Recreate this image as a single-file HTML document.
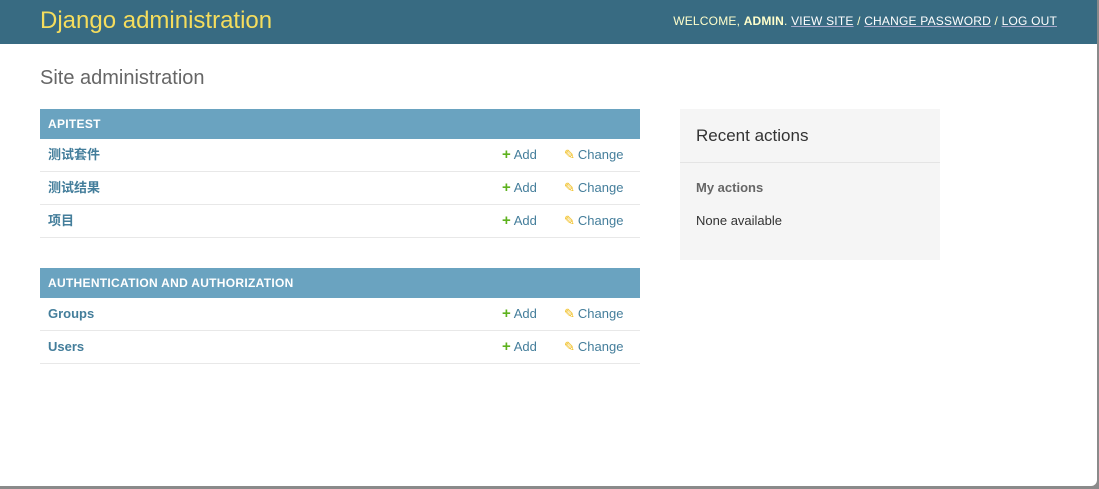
<!DOCTYPE html>
<html><head><meta charset="utf-8"><style>
body{margin:0;width:1099px;height:489px;overflow:hidden;background:#8a8a8a;font-family:"Liberation Sans","Noto Sans CJK SC",sans-serif;}
#win{position:absolute;left:0;top:0;width:1097px;height:486px;background:#fff;border-bottom-right-radius:6px;overflow:hidden;}
#hdr{height:44px;background:#386b82;position:relative;}
#hdr .t{position:absolute;left:40px;top:7px;font-size:24px;color:#f5dd5d;}
#hdr .u{position:absolute;right:40px;top:14px;font-size:12px;color:#ffc;letter-spacing:0.2px;}
#hdr .u a{color:#fff;text-decoration:underline;text-decoration-color:#aac;}
h1{position:absolute;left:40px;top:67px;margin:0;font-weight:300;font-size:20px;color:#666;}
.mod{position:absolute;left:40px;width:600px;}
.cap{height:30px;background:#6aa3c0;color:#fff;font-size:12px;font-weight:bold;line-height:30px;padding-left:8px;letter-spacing:0.3px;}
.row{height:32px;border-bottom:1px solid #e8e8e8;position:relative;font-size:13px;line-height:32px;}
.row .n{position:absolute;left:8px;color:#447e9b;font-weight:bold;}
.row .a{position:absolute;left:462px;color:#447e9b;}
.row .c{position:absolute;left:524px;color:#447e9b;}
.plus{color:#5eb21e;font-weight:bold;font-size:15px;margin-right:3px;}
.pen{color:#efb80b;margin-right:3px;}
#ra{position:absolute;left:680px;top:109px;width:260px;height:151px;background:#f5f5f5;}
#ra .h{height:53px;border-bottom:1px solid #e4e4e4;font-size:17px;color:#333;line-height:54px;padding-left:16px;}
#ra .m{position:absolute;left:16px;top:71px;font-size:13px;font-weight:bold;color:#666;}
#ra .nn{position:absolute;left:16px;top:104px;font-size:13px;color:#333;}
</style></head><body><div id="win">
<div id="hdr"><div class="t">Django administration</div>
<div class="u">WELCOME, <b>ADMIN</b>. <a>VIEW SITE</a> / <a>CHANGE PASSWORD</a> / <a>LOG OUT</a></div></div>
<h1>Site administration</h1>
<div class="mod" style="top:109px">
<div class="cap">APITEST</div>
<div class="row"><span class="n">测试套件</span><span class="a"><span class="plus">+</span>Add</span><span class="c"><span class="pen">✎</span>Change</span></div>
<div class="row"><span class="n">测试结果</span><span class="a"><span class="plus">+</span>Add</span><span class="c"><span class="pen">✎</span>Change</span></div>
<div class="row"><span class="n">项目</span><span class="a"><span class="plus">+</span>Add</span><span class="c"><span class="pen">✎</span>Change</span></div>
</div>
<div class="mod" style="top:268px">
<div class="cap">AUTHENTICATION AND AUTHORIZATION</div>
<div class="row"><span class="n">Groups</span><span class="a"><span class="plus">+</span>Add</span><span class="c"><span class="pen">✎</span>Change</span></div>
<div class="row"><span class="n">Users</span><span class="a"><span class="plus">+</span>Add</span><span class="c"><span class="pen">✎</span>Change</span></div>
</div>
<div id="ra"><div class="h">Recent actions</div><div class="m">My actions</div><div class="nn">None available</div></div>
</div></body></html>
